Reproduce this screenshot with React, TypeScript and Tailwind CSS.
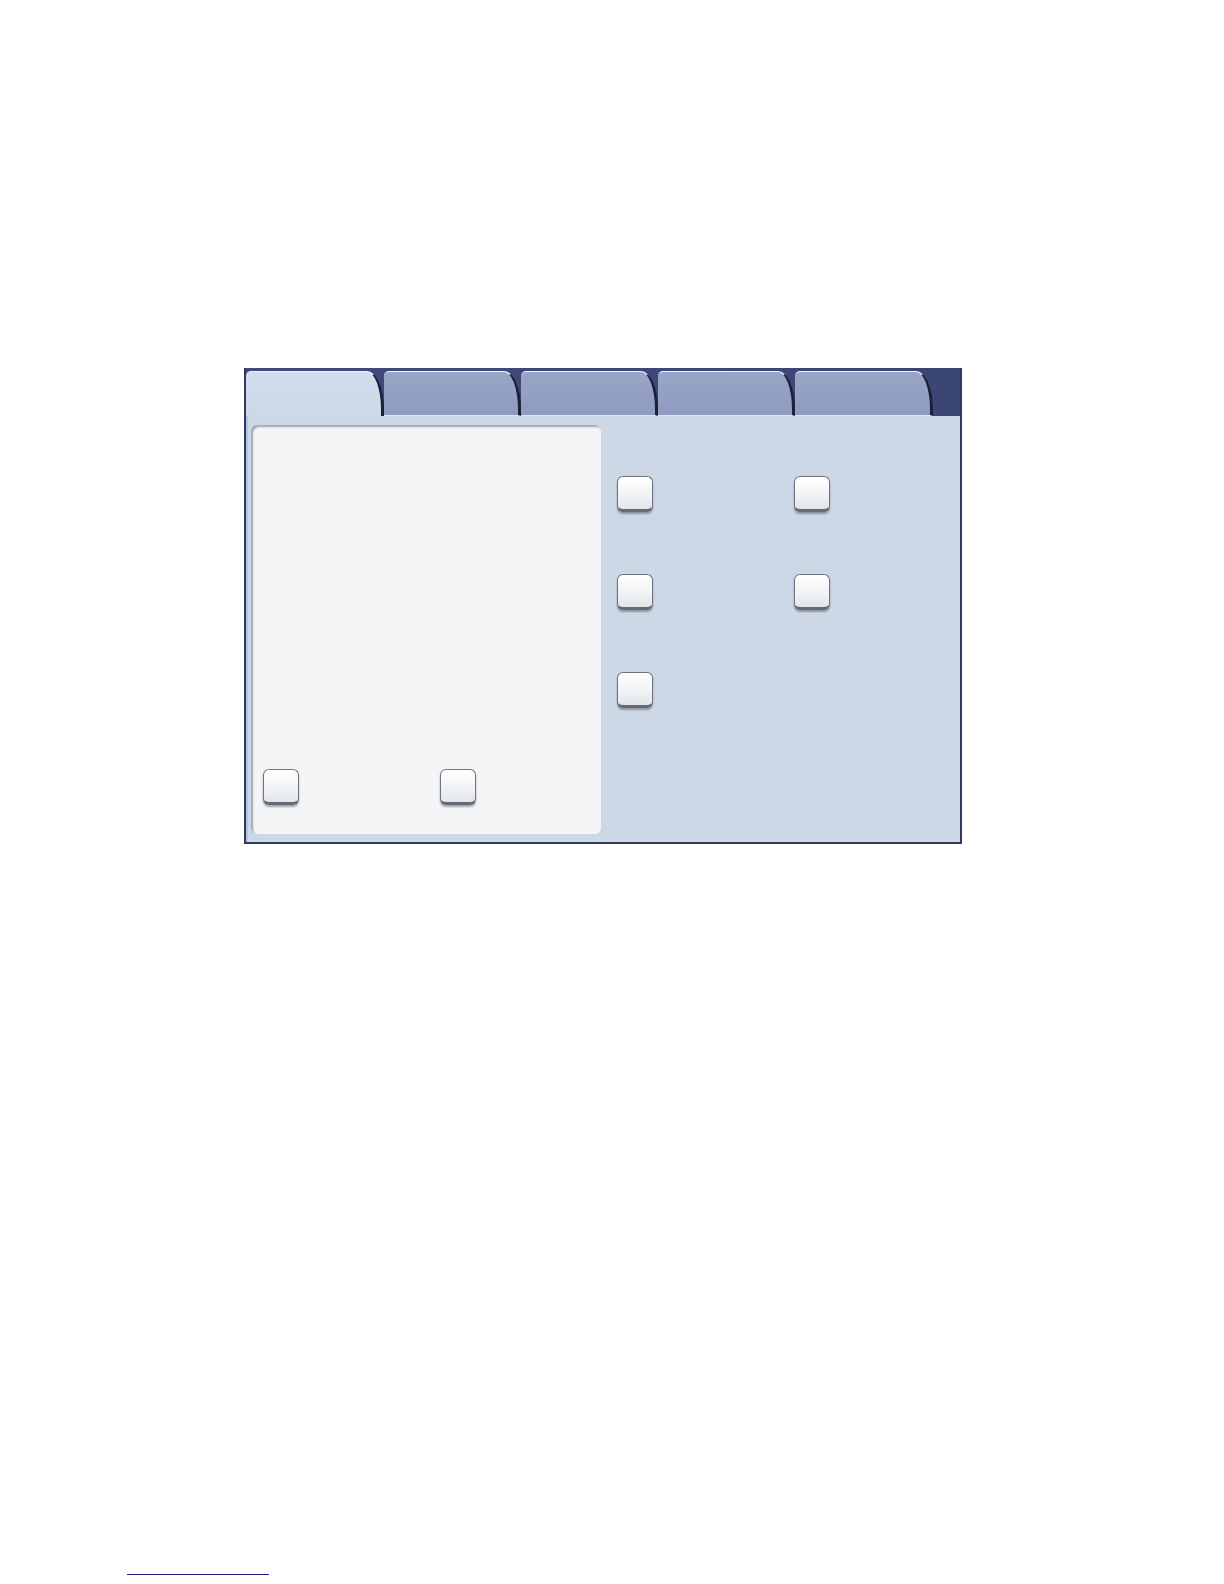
const TABS = [0, 1, 2, 3, 4];

function Knop() {
  return (
    <div className="w-[36px] h-[36px] rounded-[6px] border border-[#6f747e] border-b-[3px] border-b-[#646973] bg-gradient-to-b from-[#ffffff] via-[#f3f4f6] to-[#e2e5e9] shadow-[0_2px_2px_rgba(40,45,60,0.4),inset_0_1px_0_#ffffff]" />
  );
}

function Tab({ active, wide }: { active: boolean; wide: boolean }) {
  return (
    <div
      className={`h-[45px] ${wide ? "w-[138px]" : "w-[137px]"} rounded-tl-[5px] rounded-tr-[17px_38px] border-t border-t-[#eef2f8] border-r-[3px] border-r-[#1b2136] ${
        active
          ? "bg-gradient-to-b from-[#d3dded] to-[#cdd8e7]"
          : "bg-gradient-to-b from-[#99a6c8] to-[#8e9bbf] border-b border-b-[#dce9e1]"
      }`}
    />
  );
}

export default function App() {
  return (
    <div className="min-h-[1584px] bg-white">
      <div className="pt-[368px] pl-[244px]">
        <div className="w-[718px] h-[476px] flex flex-col border-x-2 border-b-2 border-[#2f3963] bg-gradient-to-r from-[#404b7c] to-[#3b4675]">
          <div className="h-[48px] pt-[3px] flex items-end">
            {TABS.map((i) => (
              <Tab key={i} active={i === 0} wide={i === 0 || i === 4} />
            ))}
          </div>

          <div className="flex-1 flex bg-[#cdd8e7] pl-[5px] pt-[9px] pb-[8px] shadow-[inset_2px_0_0_#b3c2dd]">
            <div className="w-[350px] h-[409px] rounded-[6px] bg-[#f4f5f6] shadow-[inset_2px_2px_2px_rgba(60,68,90,0.45)] flex flex-col justify-end pl-[12px] pb-[29px]">
              <div className="flex gap-[141px]">
                <Knop />
                <Knop />
              </div>
            </div>

            <div className="pt-[51px] pl-[16px]">
              <div className="grid grid-cols-[36px_36px] gap-x-[141px] gap-y-[62px]">
                <Knop />
                <Knop />
                <Knop />
                <Knop />
                <Knop />
              </div>
            </div>
          </div>
        </div>
      </div>

      <div className="mt-[730px] ml-[127px] w-[142px] h-px bg-[#1b1b7c]" />
    </div>
  );
}
